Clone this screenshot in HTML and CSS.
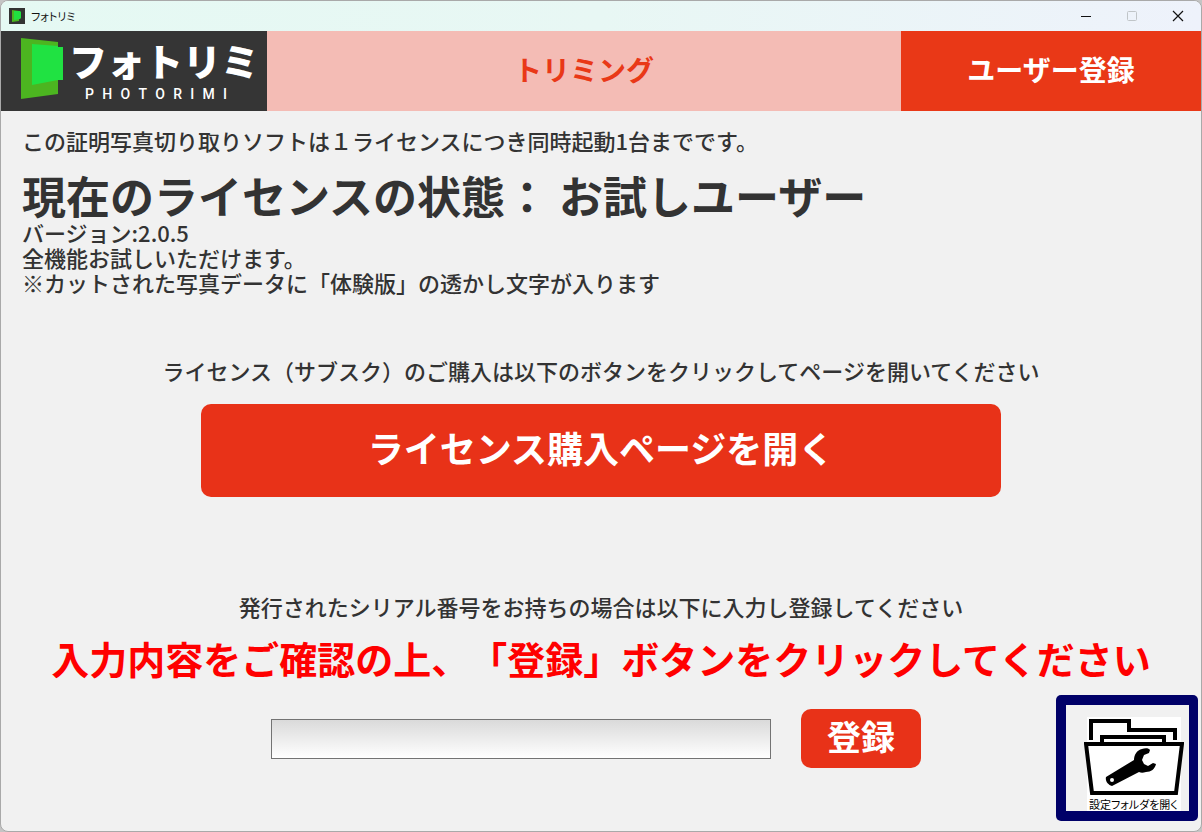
FILE: index.html
```html
<!DOCTYPE html>
<html lang="ja">
<head>
<meta charset="utf-8">
<meta name="viewport" content="width=device-width, initial-scale=1">
<title>フォトリミ</title>
<link rel="stylesheet" href="styles.css">
</head>
<body>
<div class="window">
  <header class="titlebar">
    <svg class="app-icon" viewBox="0 0 16 16" aria-hidden="true">
      <rect width="16" height="16" fill="#333"/>
      <path d="M3 2L10 3V13L3 14Z" fill="#4cb520"/>
      <path d="M5 3L11 3L12 4V10L11 11L5 12Z" fill="#20e040"/>
    </svg>
    <span class="app-name">フォトリミ</span>
    <div class="window-controls">
      <button class="control" type="button" aria-label="最小化">
        <svg viewBox="0 0 12 12"><path d="M1 6.5H11" stroke="#111"/></svg>
      </button>
      <button class="control" type="button" aria-label="最大化" disabled>
        <svg viewBox="0 0 12 12"><rect x="1.5" y="1.5" width="9" height="9" rx="1" fill="none" stroke="#c0c5c8"/></svg>
      </button>
      <button class="control" type="button" aria-label="閉じる">
        <svg viewBox="0 0 12 12"><path d="M1 1L11 11M11 1L1 11" stroke="#111" stroke-width="1.2"/></svg>
      </button>
    </div>
  </header>

  <nav class="tabs">
    <div class="logo">
      <svg class="logo-mark" viewBox="0 0 42 61" aria-hidden="true">
        <path d="M0 0L37 4V56L0 61Z" fill="#4cb520"/>
        <path d="M11 6L37 8V9H42V42H37L11 47Z" fill="#20e242"/>
      </svg>
      <div class="logo-words">
        <span class="logo-name">フォトリミ</span>
        <span class="logo-latin"><span>P</span><span>H</span><span>O</span><span>T</span><span>O</span><span>R</span><span>I</span><span>M</span><span>I</span></span>
      </div>
    </div>
    <button class="tab tab-trim" type="button">トリミング</button>
    <button class="tab tab-user" type="button">ユーザー登録</button>
  </nav>

  <main class="content">
    <section class="status">
      <p>この証明写真切り取りソフトは１ライセンスにつき同時起動1台までです。</p>
      <h1 class="state">現在のライセンスの状態： お試しユーザー</h1>
      <p>バージョン:2.0.5</p>
      <p>全機能お試しいただけます。</p>
      <p>※カットされた写真データに「体験版」の透かし文字が入ります</p>
    </section>

    <section class="purchase">
      <p>ライセンス（サブスク）のご購入は以下のボタンをクリックしてページを開いてください</p>
      <button class="action buy" type="button">ライセンス購入ページを開く</button>
    </section>

    <section class="register">
      <label for="serial">発行されたシリアル番号をお持ちの場合は以下に入力し登録してください</label>
      <p class="notice">入力内容をご確認の上、「登録」ボタンをクリックしてください</p>
      <form class="serial-form">
        <input class="serial" id="serial" type="text">
        <button class="action submit" type="button">登録</button>
      </form>
    </section>
  </main>

  <button class="settings" type="button">
    <span class="settings-face">
      <svg class="folder" viewBox="0 0 100 80" aria-hidden="true">
        <path d="M7 23V4H45V13H91V23" fill="none" stroke="#000" stroke-width="4"/>
        <path d="M18 26V20H80V26" fill="none" stroke="#000" stroke-width="4"/>
        <path d="M2 27H98L92 76H8Z" fill="#fff" stroke="#000" stroke-width="4"/>
        <path d="M22 60L50 43C50 38 53 33 58 32C61 31 65 31 66 33L65 36L60 38L58 43L60 47L64 49L69 46L72 47C71 52 67 55 62 55C59 56 57 56 55 55L28 69C24 68 21 64 22 60Z" fill="#000"/>
        <circle cx="28" cy="63" r="2" fill="#fff"/>
      </svg>
      <span class="settings-text">設定フォルダを開く</span>
    </span>
  </button>
</div>
</body>
</html>
```
FILE: styles.css
```css
* {
  box-sizing: border-box;
}

body {
  margin: 0;
  background: #c4c4c4;
  color: #333;
  font-family: "Noto Sans CJK JP", sans-serif;
  font-size: 22px;
  font-weight: 500;
  line-height: 25px;
  text-spacing-trim: space-all;
}

h1,
p {
  margin: 0;
}

button {
  padding: 0;
  border: 0;
  font-family: inherit;
  cursor: pointer;
}

.window {
  position: relative;
  display: flex;
  flex-direction: column;
  min-height: 100vh;
  border: 1px solid #a9a9a9;
  border-radius: 8px;
  background: #f1f1f1;
  overflow: hidden;
}

.titlebar {
  display: flex;
  align-items: center;
  height: 30px;
  padding-left: 8px;
  gap: 6px;
  background: linear-gradient(90deg, #e5f9f3, #e8f7f4 50%, #eef2fb);
}

.app-icon {
  width: 16px;
  height: 16px;
}

.app-name {
  color: #111;
  font-size: 11px;
  font-weight: 400;
  line-height: 16px;
  font-feature-settings: "palt";
}

.window-controls {
  display: flex;
  margin-left: auto;
}

.control {
  display: flex;
  align-items: center;
  justify-content: center;
  width: 46px;
  height: 28px;
  background: none;
}

.control svg {
  width: 12px;
  height: 12px;
}

.tabs {
  display: flex;
  height: 80px;
}

.logo {
  display: flex;
  align-items: flex-start;
  width: 266px;
  padding: 7px 8px 0 20px;
  gap: 6px;
  background: #353535;
  color: #fff;
}

.logo-mark {
  flex: none;
  width: 42px;
  height: 61px;
}

.logo-words {
  display: flex;
  flex-direction: column;
}

.logo-name {
  font-size: 38px;
  font-weight: 900;
  line-height: 44px;
  white-space: nowrap;
}

.logo-latin {
  display: flex;
  justify-content: space-between;
  margin-top: 5px;
  padding: 0 32px 0 16px;
  font-family: Roboto, sans-serif;
  font-size: 14px;
  font-weight: 500;
  line-height: 14px;
}

.tab {
  padding-bottom: 4px;
  font-size: 28px;
  font-weight: 700;
  line-height: 40px;
}

.tab-trim {
  flex: 1;
  background: #f4bcb5;
  color: #e93817;
}

.tab-user {
  width: 25%;
  background: #e93817;
  color: #fff;
}

.content {
  flex: 1;
  padding-top: 17px;
}

.status {
  padding: 0 21px;
}

.state {
  margin: 19px 0 2px;
  font-size: 44px;
  font-weight: 700;
  line-height: 46px;
}

.purchase,
.register {
  display: flex;
  flex-direction: column;
  align-items: center;
}

.purchase {
  padding-top: 63px;
  gap: 21px;
}

.action {
  border-radius: 10px;
  background: #e83218;
  color: #fff;
  font-weight: 700;
}

.buy {
  width: 800px;
  max-width: 90%;
  height: 93px;
  padding-bottom: 8px;
  font-size: 36px;
}

.register {
  padding-top: 97px;
}

.notice {
  margin-top: 16px;
  color: #f00;
  font-size: 38px;
  font-weight: 700;
  line-height: 46px;
}

.serial-form {
  display: flex;
  align-items: center;
  gap: 30px;
  margin-top: 28px;
  padding-right: 10px;
}

.serial {
  width: 500px;
  height: 40px;
  padding: 0 8px;
  border: 1px solid #737373;
  border-radius: 0;
  background: linear-gradient(#dadada, #fff);
  font: inherit;
}

.submit {
  width: 120px;
  height: 59px;
  padding-bottom: 6px;
  font-size: 34px;
}

.settings {
  position: absolute;
  right: 3px;
  bottom: 10px;
  padding: 10px 9px 10px 10px;
  border-radius: 5px;
  background: #000068;
}

.settings-face {
  display: flex;
  flex-direction: column;
  align-items: center;
  width: 123px;
  padding: 12px 2px 0 14px;
  background: linear-gradient(#fff, #fff) 21px 12px / 94px 94px no-repeat #f1f1f1;
}

.folder {
  width: 100px;
  height: 80px;
}

.settings-text {
  color: #000;
  font-size: 11px;
  font-weight: 400;
  line-height: 14px;
  white-space: nowrap;
  font-feature-settings: "palt";
}
```
